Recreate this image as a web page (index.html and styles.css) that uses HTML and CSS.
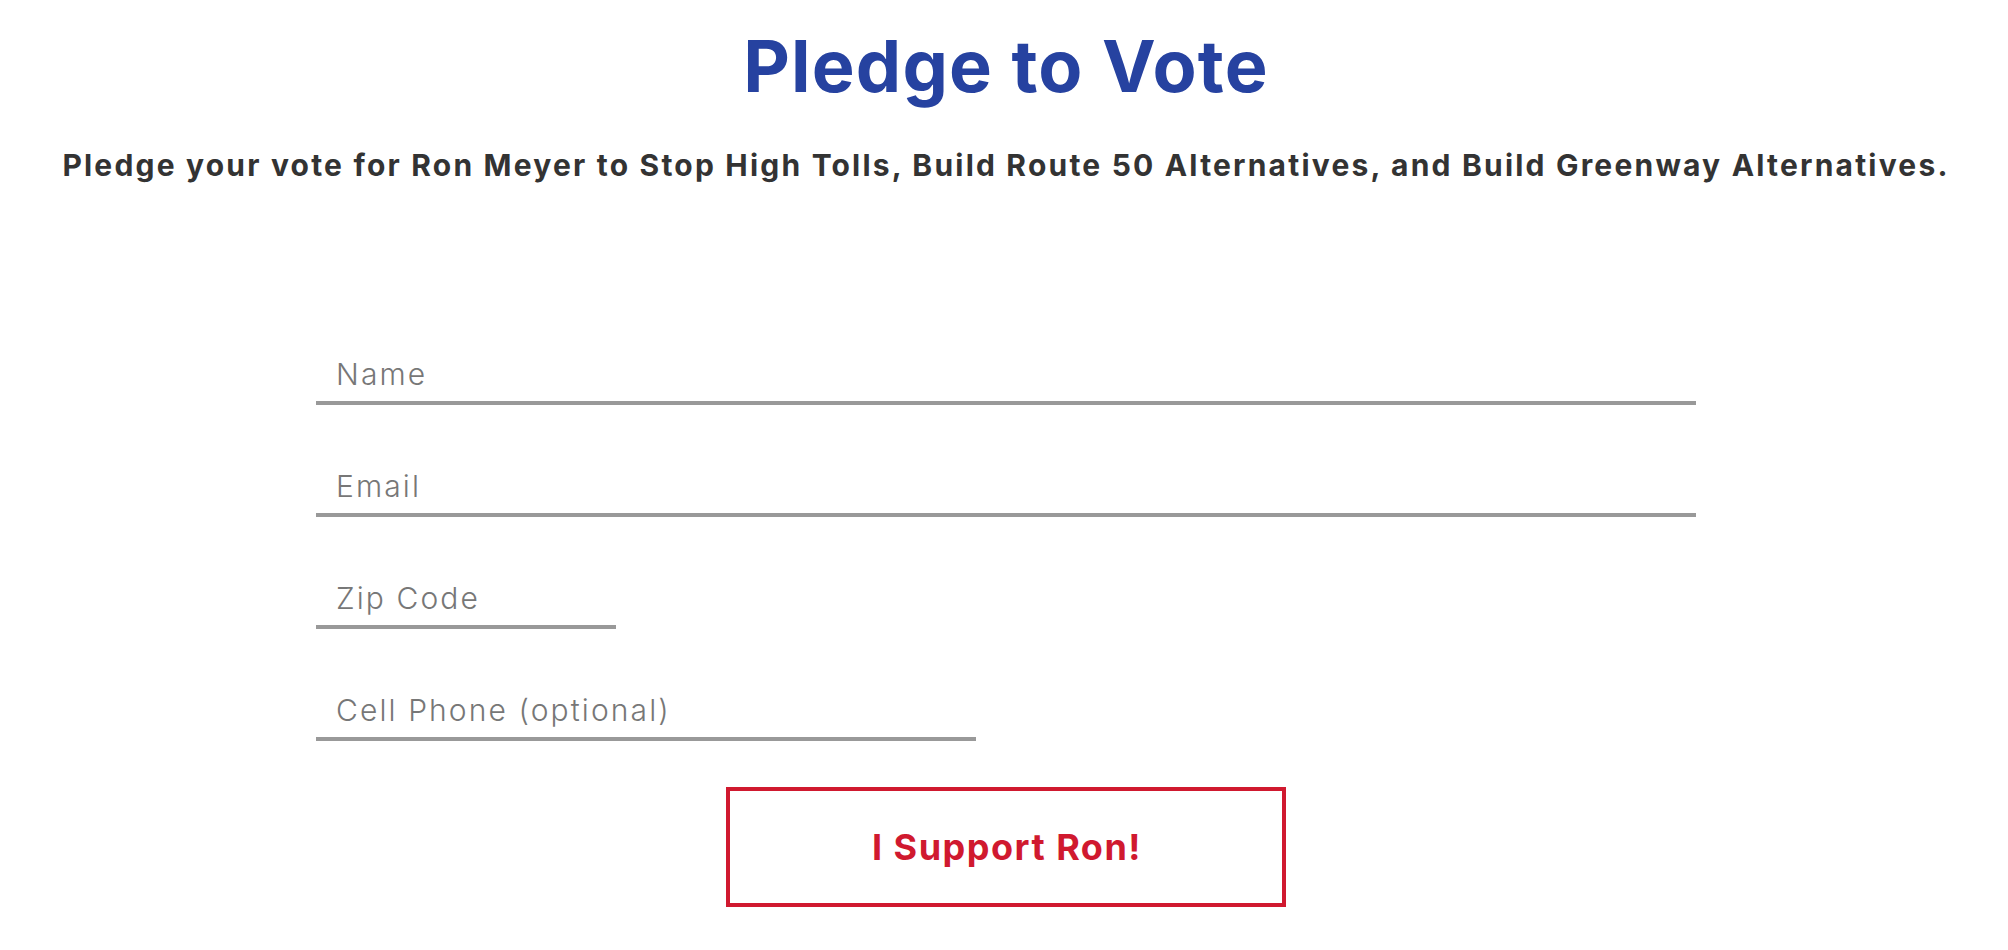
FILE: index.html
```html
<!DOCTYPE html>
<html lang="en">
<head>
<meta charset="utf-8">
<title>Pledge to Vote</title>
<link rel="stylesheet" href="styles.css">
</head>
<body>
<main class="pledge">
  <h1 class="pledge__title">Pledge to Vote</h1>
  <p class="pledge__lead">Pledge your vote for Ron Meyer to Stop High Tolls, Build Route 50 Alternatives, and Build Greenway Alternatives.</p>
  <form class="pledge__form">
    <input class="field field--full" type="text" placeholder="Name">
    <input class="field field--full" type="email" placeholder="Email">
    <input class="field field--zip" type="text" placeholder="Zip Code">
    <input class="field field--phone" type="tel" placeholder="Cell Phone (optional)">
    <button class="submit" type="button">I Support Ron!</button>
  </form>
</main>
</body>
</html>
```
FILE: styles.css
```css
* { box-sizing: border-box; }

html, body {
  margin: 0;
  padding: 0;
  background: #ffffff;
}

body {
  font-family: Inter, "Open Sans", "Liberation Sans", sans-serif;
}

.pledge {
  display: flex;
  flex-direction: column;
  align-items: center;
  padding: 30px 0 0 4px;
}

.pledge__title {
  margin: 0;
  font-size: 72px;
  line-height: 72px;
  font-weight: 700;
  color: #2642a0;
  letter-spacing: 1.2px;
}

.pledge__lead {
  margin: 48px 0 0;
  font-size: 30px;
  line-height: 30px;
  font-weight: 700;
  color: #333333;
  letter-spacing: 2.2px;
  white-space: nowrap;
}

.pledge__form {
  width: 1380px;
  margin-top: 161px;
  display: flex;
  flex-direction: column;
  align-items: flex-start;
  gap: 48px;
}

.field {
  display: block;
  height: 64px;
  padding: 6px 20px 0;
  border: 0;
  border-bottom: 4px solid #999999;
  border-radius: 0;
  background: transparent;
  font-family: inherit;
  font-size: 30px;
  font-weight: 300;
  letter-spacing: 2.1px;
  color: #333333;
  outline: none;
}

.field::placeholder {
  color: #777777;
  opacity: 1;
}

.field--full { width: 100%; }
.field--zip { width: 300px; }
.field--phone { width: 660px; }

.submit {
  align-self: center;
  margin-top: -2px;
  width: 560px;
  height: 120px;
  padding-left: 8px;
  border: 4px solid #d0192f;
  background: #ffffff;
  color: #d0192f;
  font-family: inherit;
  font-size: 36px;
  font-weight: 700;
  letter-spacing: 1.5px;
  cursor: pointer;
}
```
